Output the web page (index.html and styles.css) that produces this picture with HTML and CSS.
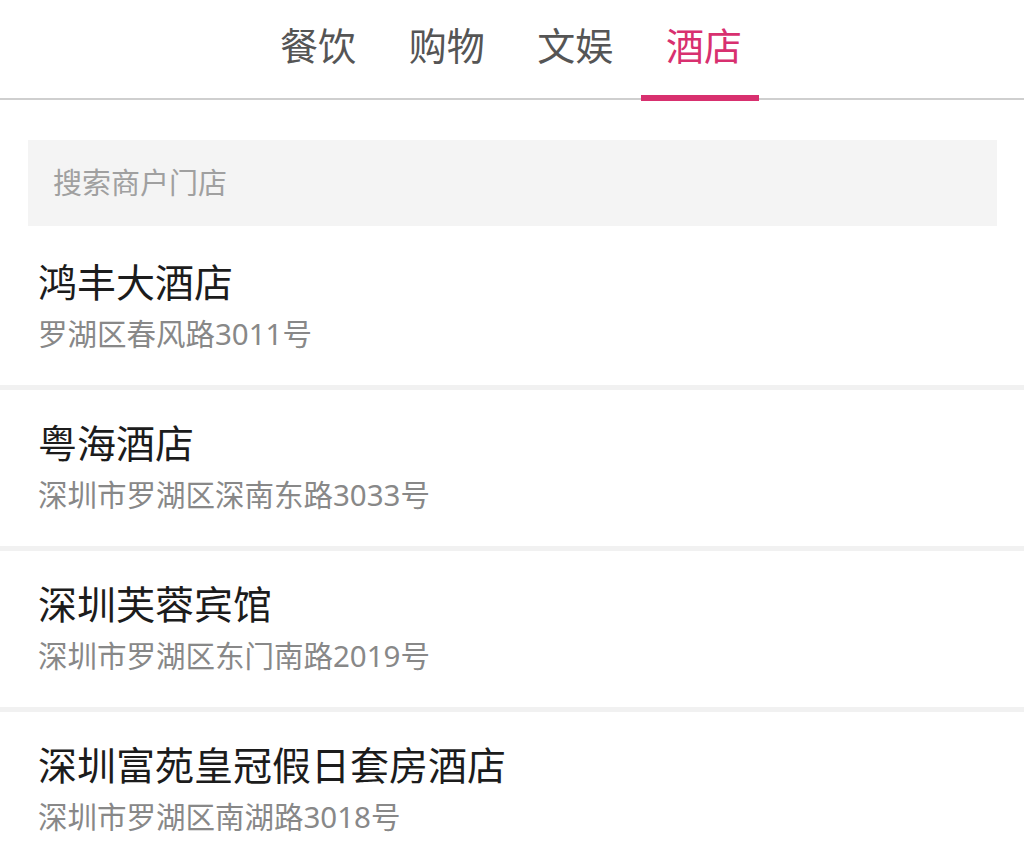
FILE: index.html
```html
<!DOCTYPE html>
<html lang="zh-CN">

<head>
  <meta charset="UTF-8">
  <meta name="viewport" content="width=device-width, initial-scale=1.0">
  <title>商户门店</title>
  <link rel="stylesheet" href="styles.css">
</head>

<body>
<div class="tab_bar">
  <div class="tab_item">餐饮</div>
  <div class="tab_item">购物</div>
  <div class="tab_item">文娱</div>
  <div class="tab_item tab_active">酒店</div>
</div>
<div class="search_wrap">
  <div class="search_box">搜索商户门店</div>
</div>
<ul class="shop_list">
  <li class="shop_item">
    <h3>鸿丰大酒店</h3>
    <p>罗湖区春风路3011号</p>
  </li>
  <li class="shop_item">
    <h3>粤海酒店</h3>
    <p>深圳市罗湖区深南东路3033号</p>
  </li>
  <li class="shop_item">
    <h3>深圳芙蓉宾馆</h3>
    <p>深圳市罗湖区东门南路2019号</p>
  </li>
  <li class="shop_item">
    <h3>深圳富苑皇冠假日套房酒店</h3>
    <p>深圳市罗湖区南湖路3018号</p>
  </li>
</ul>
</body>

</html>
```

FILE: styles.css
```css
body,
h3,
p,
ul,
li {
  padding: 0;
  margin: 0;
  font-family: 'Noto Sans', 'Noto Sans CJK SC', sans-serif;
}

body {
  background: #fff;
  overflow: hidden;
}

.tab_bar {
  display: flex;
  justify-content: center;
  gap: 10.67px;
  padding-right: 10px;
  border-bottom: 2px solid #cfcfcf;
}

.tab_item {
  padding: 20px 17px 25px 25px;
  margin-bottom: -3px;
  width: 76px;
  font-size: 38px;
  line-height: 50px;
  color: #555;
  border-bottom: 6px solid transparent;
}

.tab_active {
  color: #d8306f;
  border-bottom-color: #d8306f;
}

.search_wrap {
  padding: 40px 27px 3px 28px;
}

.search_box {
  height: 86px;
  line-height: 86px;
  padding-left: 25px;
  background: #f4f4f4;
  font-size: 29px;
  color: #a0a0a0;
}

.shop_list li {
  list-style: none;
}

.shop_item {
  padding: 29px 38px 31px;
  border-bottom: 5px solid #f1f1f1;
}

.shop_item h3 {
  font-weight: normal;
  font-size: 39px;
  line-height: 48px;
  color: #1c1c1c;
}

.shop_item p {
  margin-top: 8px;
  font-size: 29.5px;
  line-height: 40px;
  color: #888;
}
```
